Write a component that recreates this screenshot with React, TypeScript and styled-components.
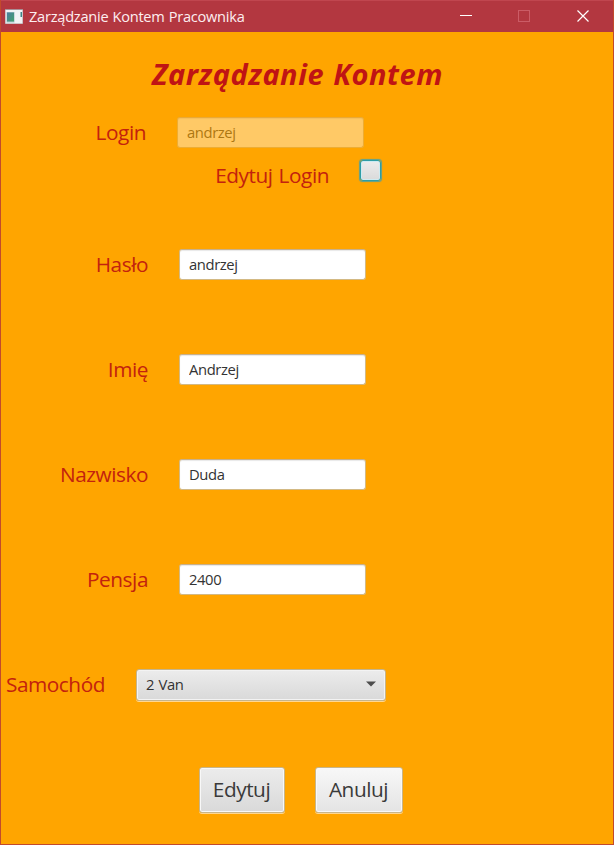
import React from 'react';
import styled, { createGlobalStyle } from 'styled-components';

const Global = createGlobalStyle`
  * { box-sizing: border-box; }
  body { margin: 0; background: #ffa500; }
`;

const Window = styled.div`
  width: 614px;
  height: 845px;
  overflow: hidden;
  display: flex;
  flex-direction: column;
  background: #ffa500;
  border: 1px solid #c24a2c;
  border-top: 0;
  font-family: 'Open Sans', 'Noto Sans', sans-serif;
`;

const TitleBar = styled.header`
  flex: none;
  height: 32px;
  margin: 0 -1px;
  display: flex;
  align-items: center;
  background: #b33740;
  border: 1px solid #bb4750;
  border-top-color: #c0464f;
  border-bottom: 0;
  padding: 0 1px 0 4px;
`;

const Caption = styled.span`
  flex: 1;
  margin: -2px 0 0 5px;
  font-size: 14.6px;
  line-height: 30px;
  letter-spacing: -0.25px;
  word-spacing: 0.6px;
  color: #fdeef0;
  white-space: nowrap;
`;

const WindowButton = styled.button`
  width: 58.5px;
  height: 31px;
  padding: 0 0 2px;
  border: 0;
  background: none;
  display: flex;
  align-items: center;
  justify-content: center;
`;

const Heading = styled.h1`
  flex: none;
  height: 78px;
  margin: 0;
  padding: 3px 0 0 151px;
  line-height: 78px;
  font-family: 'Noto Sans', 'Open Sans', sans-serif;
  font-size: 29px;
  font-weight: 700;
  font-style: italic;
  letter-spacing: 0.55px;
  word-spacing: 1px;
  color: #c01414;
  white-space: nowrap;
`;

const Row = styled.div<{ $height?: number }>`
  flex: none;
  height: ${p => p.$height ?? 105}px;
  display: flex;
  align-items: center;
`;

const Label = styled.label<{ $width: number }>`
  flex: none;
  width: ${p => p.$width}px;
  margin-right: 30px;
  padding: 0 1px 2px 0;
  text-align: right;
  font-size: 20.8px;
  line-height: 28px;
  letter-spacing: -0.45px;
  word-spacing: 1px;
  color: #c3220e;
  white-space: nowrap;
`;

const EditLabel = styled(Label)`
  align-self: flex-start;
  margin-top: 6px;
  padding-right: 0;
`;

const Field = styled.input`
  width: 187px;
  height: 31px;
  padding: 0 9px 2px;
  border: 1px solid #d3b983;
  border-top-color: #c9b08a;
  border-radius: 3px;
  background: #fff;
  box-shadow: inset 0 1px 1px #e8e8e8;
  color: #333;
  font: 14.8px 'Open Sans', 'Noto Sans', sans-serif;
  letter-spacing: -0.4px;
  outline: 0;
  &:disabled { opacity: 0.4; }
`;

const CheckBox = styled.button`
  align-self: flex-start;
  width: 21px;
  height: 21px;
  margin: 5px 0 0 1px;
  padding: 0;
  border: 1px solid #2f9da6;
  border-radius: 3px;
  background: linear-gradient(#ececec, #dadada);
  box-shadow: 0 0 1px 0.5px #5aa294, inset 0 0 0 1px #cdebf2;
`;

const Combo = styled.button`
  width: 250px;
  height: 32px;
  padding: 0 9px 2px 9px;
  display: flex;
  align-items: center;
  justify-content: space-between;
  border: 1px solid #c5b48c;
  border-radius: 3px;
  background: linear-gradient(#ececec, #d9d9d9);
  box-shadow: inset 0 0 0 1px #f3f3f3, 0 1px 0 #ffd791;
  color: #333;
  font: 14.8px 'Open Sans', 'Noto Sans', sans-serif;
  letter-spacing: -0.4px;
  word-spacing: 1px;
`;

const Arrow = styled.svg`
  margin-top: 1px;
`;

const Actions = styled(Row)`
  padding-left: 198px;
  gap: 30px;
`;

const ActionButton = styled.button<{ $width: number; $hover?: boolean }>`
  width: ${p => p.$width}px;
  height: 46px;
  padding: 0 1px 2px 0;
  border: 1px solid #c8b58a;
  border-radius: 3px;
  background: ${p => (p.$hover ? 'linear-gradient(#f8f8f8, #e4e4e4)' : 'linear-gradient(#ececec, #d9d9d9)')};
  box-shadow: inset 0 0 0 1px #f8f8f8, 0 1px 0 #ffd791;
  color: #3a3a3a;
  font: 20.8px/42px 'Open Sans', 'Noto Sans', sans-serif;
  letter-spacing: -0.45px;
`;

const AppIcon = () => (
  <svg width="19" height="16" viewBox="0 0 19 16">
    <defs>
      <linearGradient id="pane" x1="0" y1="0" x2="1" y2="1">
        <stop offset="0" stopColor="#4b7fa0" />
        <stop offset="1" stopColor="#43a06c" />
      </linearGradient>
    </defs>
    <rect x="0" y="0" width="18" height="15" fill="#a98f96" />
    <rect x="0.5" y="1" width="17" height="13.5" fill="#f1f3f5" />
    <rect x="1.5" y="3" width="8" height="10.5" fill="#a9c3cc" />
    <rect x="2" y="3.5" width="7" height="9" fill="url(#pane)" />
    <rect x="15.5" y="3" width="1.5" height="5" fill="#3f8585" />
  </svg>
);

const fields = [
  { id: 'haslo', label: 'Hasło', value: 'andrzej' },
  { id: 'imie', label: 'Imię', value: 'Andrzej' },
  { id: 'nazwisko', label: 'Nazwisko', value: 'Duda' },
  { id: 'pensja', label: 'Pensja', value: '2400' },
];

export default function App() {
  return (
    <>
      <Global />
      <Window>
        <TitleBar>
          <AppIcon />
          <Caption>Zarządzanie Kontem Pracownika</Caption>
          <WindowButton aria-label="Minimalizuj">
            <svg width="12" height="12"><path d="M0 5.5H12" stroke="#fff" /></svg>
          </WindowButton>
          <WindowButton aria-label="Maksymalizuj">
            <svg width="12" height="12"><rect x=".5" y=".5" width="11" height="11" fill="none" stroke="#cb5c66" /></svg>
          </WindowButton>
          <WindowButton aria-label="Zamknij">
            <svg width="12" height="12"><path d="M.5 .5 11.5 11.5M11.5 .5 .5 11.5" stroke="#fff" strokeWidth="1.2" /></svg>
          </WindowButton>
        </TitleBar>
        <Heading>Zarządzanie Kontem</Heading>
        <Row $height={45}>
          <Label $width={146} htmlFor="login">Login</Label>
          <Field id="login" defaultValue="andrzej" disabled />
        </Row>
        <Row $height={57}>
          <EditLabel $width={328}>Edytuj Login</EditLabel>
          <CheckBox aria-label="Edytuj Login" />
        </Row>
        {fields.map(f => (
          <Row key={f.id}>
            <Label $width={148} htmlFor={f.id}>{f.label}</Label>
            <Field id={f.id} defaultValue={f.value} />
          </Row>
        ))}
        <Row>
          <Label $width={105}>Samochód</Label>
          <Combo>
            2 Van
            <Arrow width="10" height="6"><path d="M0 .5H10L5 5.5Z" fill="#4d4d4d" /></Arrow>
          </Combo>
        </Row>
        <Actions>
          <ActionButton $width={86}>Edytuj</ActionButton>
          <ActionButton $width={88} $hover>Anuluj</ActionButton>
        </Actions>
      </Window>
    </>
  );
}
